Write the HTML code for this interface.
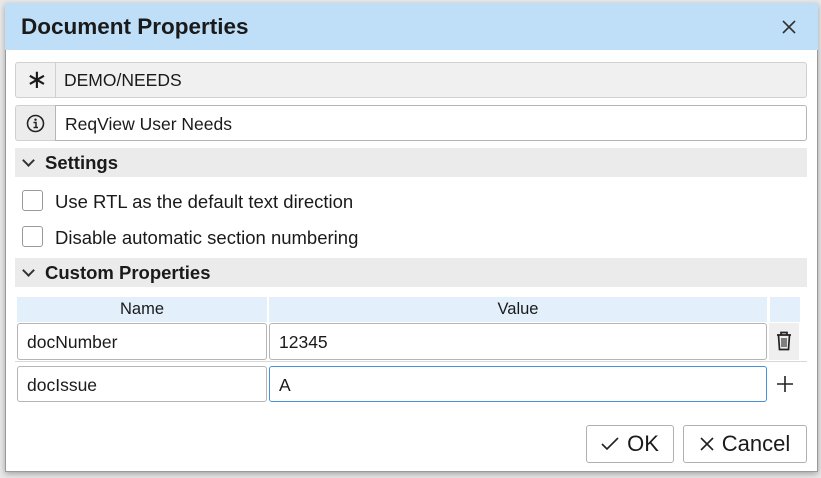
<!DOCTYPE html>
<html><head><style>
*{box-sizing:border-box;margin:0;padding:0}
body{width:821px;height:478px;background:#e9e9e9;font-family:"Liberation Sans",sans-serif;color:#1a1a1a;position:relative;overflow:hidden}
.a{position:absolute}
.dlg{left:5px;top:3px;width:813px;height:469px;background:#fff;border:1px solid #9a9a9a;box-shadow:0 2px 6px rgba(0,0,0,.3)}
.hdr{left:5px;top:3px;width:813px;height:47px;background:#bfdff8}
.inp{border:1px solid #b5b5b5;border-radius:3px;background:#fff;font-size:17.5px;padding-left:9px;display:flex;align-items:center}
.sec{background:#ebebeb;left:15px;width:792px;height:29px;font-weight:bold;font-size:18.5px;display:flex;align-items:center;padding-left:30px}
.chev{position:absolute;left:9px;top:8px;width:9px;height:9px;border-right:2px solid #333;border-bottom:2px solid #333;transform:rotate(45deg)}
.cb{width:21px;height:21px;border:1px solid #999;border-radius:3px;background:#fff}
.lbl{font-size:18.5px}
.th{top:297px;height:25px;background:#e3f0fc;font-size:16.5px;display:flex;align-items:center;justify-content:center}
.btn{top:425px;height:38px;border:1px solid #b0b0b0;border-radius:3px;background:#fff;font-size:22px;display:flex;align-items:center;justify-content:center}
</style></head><body>
<div class="a dlg"></div>
<div class="a hdr"></div>
<div class="a" style="left:21px;top:14px;font-size:22.5px;font-weight:bold">Document Properties</div>
<svg class="a" style="left:781px;top:19px" width="16" height="16"><path d="M2 2L14 14M14 2L2 14" stroke="#333" stroke-width="1.6"/></svg>

<div class="a" style="left:15px;top:62px;width:792px;height:36px;border:1px solid #d0d0d0;border-radius:3px;background:#f0f0f0"></div>
<div class="a" style="left:55px;top:62px;width:1px;height:36px;background:#d0d0d0"></div>
<div class="a" style="left:26px;top:64px;font-size:26px">∗</div>
<div class="a" style="left:64px;top:70px;font-size:17.5px">DEMO/NEEDS</div>

<div class="a" style="left:15px;top:105px;width:41px;height:36px;border:1px solid #d0d0d0;border-radius:3px 0 0 3px;background:#ececec"></div>
<svg class="a" style="left:26px;top:114px" width="19" height="19"><circle cx="9.5" cy="9.5" r="8" fill="none" stroke="#222" stroke-width="1.6"/><circle cx="9.5" cy="5.7" r="1.2" fill="#222"/><path d="M7.5 8.5h2.5v5M7.5 13.5h4.5" stroke="#222" stroke-width="1.5" fill="none"/></svg>
<div class="a inp" style="left:55px;top:105px;width:752px;height:36px;border-radius:0 3px 3px 0;padding-top:2px">ReqView User Needs</div>

<div class="a sec" style="top:148px"><span class="chev"></span>Settings</div>
<div class="a cb" style="left:22px;top:190px"></div>
<div class="a lbl" style="left:55px;top:191px">Use RTL as the default text direction</div>
<div class="a cb" style="left:22px;top:226px"></div>
<div class="a lbl" style="left:55px;top:227px">Disable automatic section numbering</div>

<div class="a sec" style="top:258px"><span class="chev"></span>Custom Properties</div>
<div class="a th" style="left:17px;width:250px">Name</div>
<div class="a th" style="left:269px;width:498px">Value</div>
<div class="a th" style="left:770px;width:30px"></div>

<div class="a inp" style="left:17px;top:323px;width:250px;height:37px;padding-top:2px">docNumber</div>
<div class="a inp" style="left:269px;top:323px;width:498px;height:37px;padding-top:2px">12345</div>
<div class="a" style="left:769px;top:323px;width:30px;height:37px;background:#efefef"></div>
<svg class="a" style="left:775px;top:330px" width="18" height="22"><path d="M2 5h14M6 5V2.5h6V5M3.5 5l1 14.5h9l1-14.5" fill="none" stroke="#222" stroke-width="1.7"/><path d="M7 8v9M9 8v9M11 8v9" stroke="#222" stroke-width="1.1"/></svg>
<div class="a" style="left:15px;top:361px;width:792px;height:1px;background:#d8d8d8"></div>

<div class="a inp" style="left:17px;top:366px;width:250px;height:36px;padding-top:2px">docIssue</div>
<div class="a inp" style="left:269px;top:366px;width:498px;height:36px;border-color:#4a90d9;padding-top:2px">A</div>
<svg class="a" style="left:776px;top:375px" width="18" height="18"><path d="M9 1v16M1 9h16" stroke="#222" stroke-width="1.6"/></svg>

<div class="a btn" style="left:586px;width:88px"><svg width="18" height="14" style="margin-right:8px"><path d="M1 7l5 5L17 1" fill="none" stroke="#222" stroke-width="1.6"/></svg>OK</div>
<div class="a btn" style="left:683px;width:124px"><svg width="14" height="14" style="margin-right:8px"><path d="M1 1l12 12M13 1L1 13" stroke="#222" stroke-width="1.6"/></svg>Cancel</div>
</body></html>
